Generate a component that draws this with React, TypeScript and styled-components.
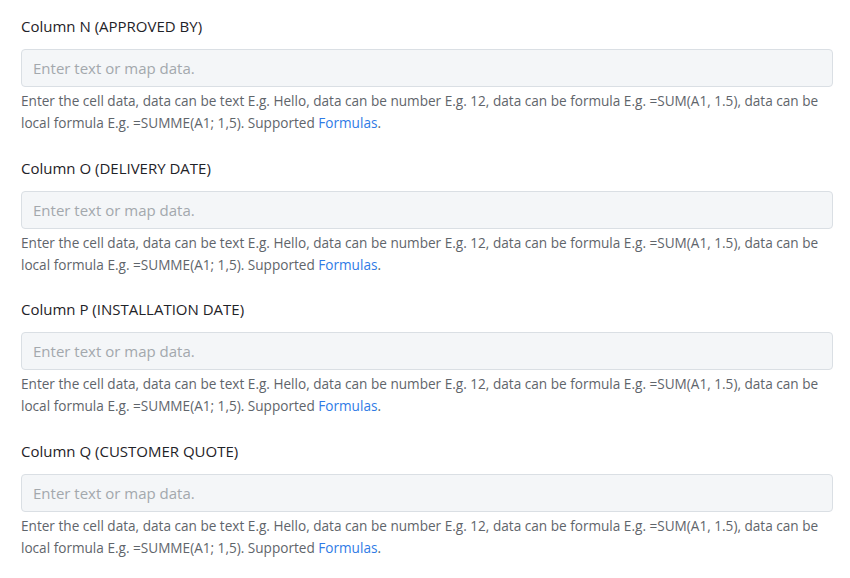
import React from 'react'
import styled, { createGlobalStyle } from 'styled-components'

const GlobalStyle = createGlobalStyle`
  body {
    margin: 0;
    background: #ffffff;
    font-family: "Open Sans", "Noto Sans", sans-serif;
  }
`

const Page = styled.div`
  display: flex;
  flex-direction: column;
  gap: 23.5px;
  width: 812px;
  padding: 16px 17px 0 21px;
`

const Field = styled.div`
  display: flex;
  flex-direction: column;
`

const Label = styled.label`
  font-size: 15px;
  line-height: 20px;
  color: #1f2328;
  margin-bottom: 13px;
`

const Input = styled.input`
  box-sizing: border-box;
  height: 38px;
  width: 100%;
  padding: 0 11px;
  border: 1px solid #dadfe4;
  border-radius: 4px;
  background: #f4f6f8;
  font-family: inherit;
  font-size: 15px;
  color: #333;
  outline: none;

  &::placeholder {
    color: #a3a8ad;
  }
`

const Help = styled.p`
  margin: 3px 0 0;
  font-size: 13.6px;
  line-height: 22px;
  color: #5f656b;
`

const FormulaLink = styled.a`
  color: #2f7be6;
  text-decoration: none;
`

const columns = [
  'Column N (APPROVED BY)',
  'Column O (DELIVERY DATE)',
  'Column P (INSTALLATION DATE)',
  'Column Q (CUSTOMER QUOTE)',
]

export default function App() {
  return (
    <>
      <GlobalStyle />
      <Page>
        {columns.map((name) => (
          <Field key={name}>
            <Label>{name}</Label>
            <Input placeholder="Enter text or map data." />
            <Help>
              Enter the cell data, data can be text E.g. Hello, data can be number E.g. 12, data can be
              formula E.g. =SUM(A1, 1.5), data can be local formula E.g. =SUMME(A1; 1,5). Supported{' '}
              <FormulaLink href="#">Formulas</FormulaLink>.
            </Help>
          </Field>
        ))}
      </Page>
    </>
  )
}
